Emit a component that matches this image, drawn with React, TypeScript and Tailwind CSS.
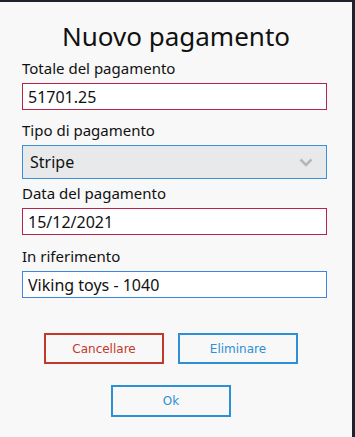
export default function App() {
  const label = "block text-[15px] leading-5 text-[#111]";
  const input =
    "w-full h-[27px] bg-white px-[5px] text-[16px] text-[#111] outline-none";
  return (
    <div className="w-[355px] h-[437px] bg-[#1e232b] pt-[2px] pr-[3px]">
      <div
        className="h-full bg-[#f8f8f8] px-[22px]"
        style={{ fontFamily: '"Noto Sans", sans-serif' }}
      >
        <h1 className="pt-[15px] text-center text-[26px] leading-[38px] text-[#111]">
          Nuovo pagamento
        </h1>
        <div className="mt-[3px] w-[305px]">
          <label className={label}>Totale del pagamento</label>
          <input
            className={`${input} mt-[5px] border border-[#b5254b]`}
            defaultValue="51701.25"
          />

          <label className={`${label} mt-[10px]`}>Tipo di pagamento</label>
          <div className="mt-[5px] flex h-[34px] items-center justify-between border border-[#3a8fd6] bg-[#e8e9ea] px-[7px]">
            <span className="text-[16px] text-[#111]">Stripe</span>
            <svg width="14" height="9" viewBox="0 0 14 9" className="mr-[6px]">
              <path d="M1.5 1.5 L7 7 L12.5 1.5" fill="none" stroke="#b5b6b8" strokeWidth="2.5" />
            </svg>
          </div>

          <label className={`${label} mt-[4px]`}>Data del pagamento</label>
          <input
            className={`${input} mt-[5px] border border-[#b5254b]`}
            defaultValue="15/12/2021"
          />

          <label className={`${label} mt-[11px]`}>In riferimento</label>
          <input
            className={`${input} mt-[5px] border border-[#3b86e0]`}
            defaultValue="Viking toys - 1040"
          />
        </div>

        <div
          className="mt-[35px] flex w-[298px] flex-col items-center gap-[21px]"
          style={{ fontFamily: '"DejaVu Sans", sans-serif' }}
        >
          <div className="flex gap-[14px]">
            <button className="h-[31px] w-[120px] border-2 border-[#c0392b] text-[12px] text-[#c0392b]">
              Cancellare
            </button>
            <button className="h-[31px] w-[120px] border-2 border-[#2d8fd5] text-[12px] text-[#2d8fd5]">
              Eliminare
            </button>
          </div>
          <button className="h-[32px] w-[120px] border-2 border-[#2d8fd5] text-[12px] text-[#2d8fd5]">
            Ok
          </button>
        </div>
      </div>
    </div>
  );
}
